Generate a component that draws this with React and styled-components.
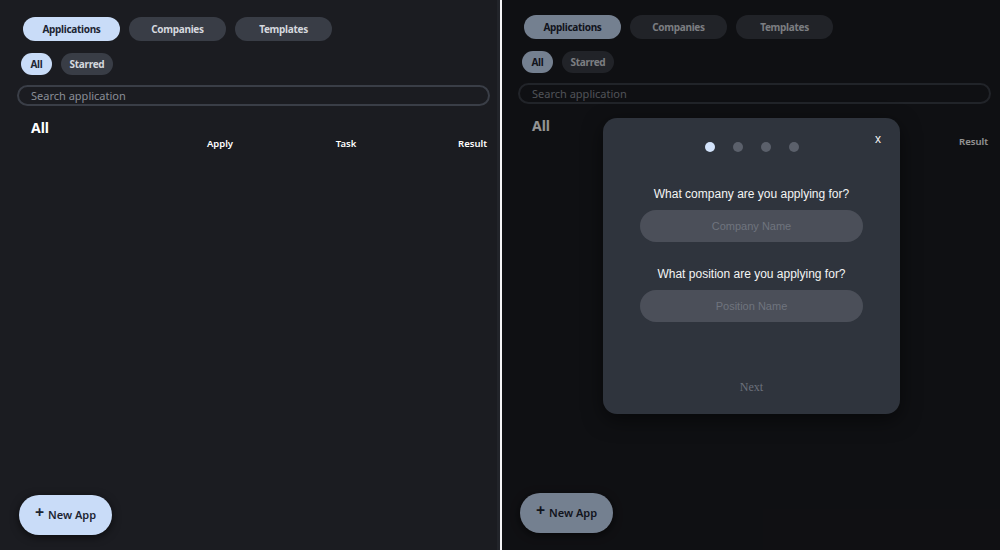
import styled, { createGlobalStyle } from "styled-components";

const GlobalStyle = createGlobalStyle`
  html, body {
    margin: 0;
    padding: 0;
    background: #000;
  }
  * {
    box-sizing: border-box;
  }
`;

const Page = styled.div`
  display: flex;
  width: 1000px;
  height: 550px;
  overflow: hidden;
  font-family: "Noto Sans", "Open Sans", sans-serif;
`;

const Divider = styled.div`
  width: 2px;
  background: #f4f4f6;
`;

const Screen = styled.div`
  position: relative;
  width: ${(p) => p.$width}px;
  height: 550px;
  background: #1b1c21;
  border-right: ${(p) => (p.$edge ? "3px solid #22242a" : "none")};
  display: flex;
  flex-direction: column;
  padding: ${(p) => (p.$shift ? "15px 6px 0 16px" : "17px 7px 0 17px")};
`;

const TabRow = styled.div`
  display: flex;
  gap: 9px;
  margin-left: 6px;
`;

const Pill = styled.button`
  border: none;
  border-radius: 999px;
  background: ${(p) => (p.$active ? "#c9dcf8" : "#393d46")};
  color: ${(p) => (p.$active ? "#1d2533" : "#d5d8de")};
  font-family: "Noto Sans", sans-serif;
  font-weight: 700;
  font-size: 10px;
  letter-spacing: -0.3px;
  height: ${(p) => (p.$small ? 22 : 24)}px;
  width: ${(p) => p.$w}px;
  padding: 0;
  display: flex;
  align-items: center;
  justify-content: center;
`;

const FilterRow = styled.div`
  display: flex;
  gap: 9px;
  margin: 12px 0 0 4px;
`;

const Search = styled.div`
  margin-top: 10px;
  height: 21px;
  width: 473px;
  border: 2px solid #3a3e47;
  border-radius: 999px;
  color: #8a8e97;
  font-size: 11px;
  display: flex;
  align-items: center;
  padding-left: 12px;
`;

const Heading = styled.div`
  margin: 13px 0 0 14px;
  color: #fff;
  font-weight: 700;
  font-size: 14px;
  line-height: 18px;
`;

const HeaderRow = styled.div`
  display: grid;
  grid-template-columns: 178px 50px 76px 50px 116px;
  color: #fff;
  font-weight: 600;
  font-size: 9.5px;
  line-height: 14px;
  margin-top: 0;
`;

const Col = styled.span`
  text-align: ${(p) => p.$align || "center"};
`;

const Spacer = styled.div`
  flex: 1;
`;

const NewAppButton = styled.button`
  align-self: flex-start;
  margin: 0 0 ${(p) => (p.$shift ? 17 : 15)}px 2px;
  width: 93px;
  height: 40px;
  border: none;
  border-radius: 999px;
  background: #c9dcf8;
  color: #1d2533;
  font-family: "Noto Sans", sans-serif;
  font-weight: 600;
  font-size: 11px;
  display: flex;
  align-items: center;
  justify-content: center;
  gap: 4px;
  padding-bottom: 3px;
  box-shadow: 0 2px 8px rgba(0, 0, 0, 0.6);
`;

const Plus = styled.span`
  font-size: 16px;
  font-weight: 700;
  line-height: 1;
  margin-top: -4px;
`;

const Overlay = styled.div`
  position: absolute;
  inset: 0;
  background: rgba(0, 0, 0, 0.42);
`;

const Modal = styled.div`
  position: absolute;
  top: 118px;
  left: 101px;
  width: 297px;
  height: 296px;
  background: #2f343d;
  border-radius: 14px;
  box-shadow: 0 6px 20px rgba(0, 0, 0, 0.5);
  display: flex;
  flex-direction: column;
  align-items: center;
  padding-top: 24px;
  font-family: "Liberation Sans", Arial, sans-serif;
`;

const Close = styled.span`
  position: absolute;
  top: 14px;
  right: 19px;
  color: #f2f2f2;
  font-size: 12px;
`;

const Dots = styled.div`
  display: flex;
  gap: 18px;
`;

const Dot = styled.span`
  width: 10px;
  height: 10px;
  border-radius: 50%;
  background: ${(p) => (p.$on ? "#d3e3fb" : "#5b606b")};
`;

const Question = styled.div`
  color: #f4f4f4;
  font-size: 12px;
  line-height: 16px;
  margin-top: ${(p) => p.$top}px;
`;

const Field = styled.div`
  margin-top: 8px;
  width: 223px;
  height: 32px;
  border-radius: 999px;
  background: #4b4f59;
  color: #6f747e;
  font-size: 11px;
  display: flex;
  align-items: center;
  justify-content: center;
`;

const Next = styled.div`
  margin-top: 58px;
  color: #6c717c;
  font-family: "Liberation Serif", serif;
  font-size: 12px;
`;

const AppScreen = ({ width, shift, edge, children }) => (
  <Screen $width={width} $shift={shift} $edge={edge}>
    <TabRow>
      <Pill $active $w={97}>Applications</Pill>
      <Pill $w={97}>Companies</Pill>
      <Pill $w={97}>Templates</Pill>
    </TabRow>
    <FilterRow>
      <Pill $active $small $w={31}>All</Pill>
      <Pill $small $w={52}>Starred</Pill>
    </FilterRow>
    <Search>Search application</Search>
    <Heading>All</Heading>
    <HeaderRow>
      <span />
      <Col>Apply</Col>
      <span />
      <Col>Task</Col>
      <Col $align="right">Result</Col>
    </HeaderRow>
    <Spacer />
    <NewAppButton $shift={shift}>
      <Plus>+</Plus>New App
    </NewAppButton>
    {children}
  </Screen>
);

const App = () => {
  return (
    <Page>
      <GlobalStyle />
      <AppScreen width={500} edge />
      <Divider />
      <AppScreen width={498} shift>
        <Overlay />
        <Modal>
          <Close>x</Close>
          <Dots>
            <Dot $on />
            <Dot />
            <Dot />
            <Dot />
          </Dots>
          <Question $top={34}>What company are you applying for?</Question>
          <Field>Company Name</Field>
          <Question $top={24}>What position are you applying for?</Question>
          <Field>Position Name</Field>
          <Next>Next</Next>
        </Modal>
      </AppScreen>
    </Page>
  );
};

export default App;
